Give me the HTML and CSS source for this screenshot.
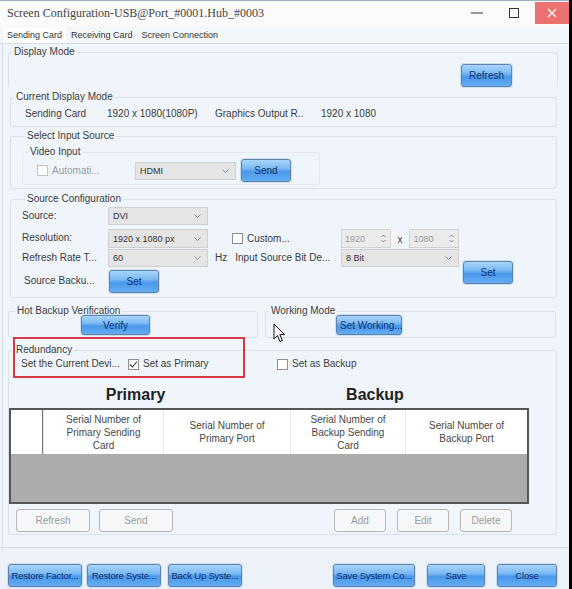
FILE: index.html
```html
<!DOCTYPE html>
<html lang="en">
<head>
    <meta charset="UTF-8">
    <meta name="viewport" content="width=device-width, initial-scale=1.0">
    <title>Screen Configuration</title>
    <link rel="stylesheet" href="styles.css">
</head>
<body>
    <div class="window">
        <!-- Title bar -->
        <div class="titlebar">
            <span class="title">Screen Configuration-USB@Port_#0001.Hub_#0003</span>
            <div class="win-controls">
                <span class="win-btn minimize">
                    <svg width="12" height="2" viewBox="0 0 12 2"><line x1="0" y1="1" x2="12" y2="1" stroke="#333" stroke-width="1"/></svg>
                </span>
                <span class="win-btn maximize">
                    <svg width="10" height="10" viewBox="0 0 10 10"><rect x="0.5" y="0.5" width="9" height="9" fill="none" stroke="#333" stroke-width="1"/></svg>
                </span>
                <span class="win-btn close">
                    <svg width="10" height="10" viewBox="0 0 10 10"><path d="M1 1 L9 9 M9 1 L1 9" stroke="#fff" stroke-width="1.2"/></svg>
                </span>
            </div>
        </div>

        <!-- Tabs -->
        <div class="tabs">
            <span class="tab active">Sending Card</span>
            <span class="tab">Receiving Card</span>
            <span class="tab">Screen Connection</span>
        </div>

        <!-- Sending Card page -->
        <div class="page">
            <fieldset class="group display-mode">
                <legend>Display Mode</legend>
                <div class="group-body">
                    <button class="btn-blue refresh">Refresh</button>
                </div>
            </fieldset>

            <fieldset class="group inner current-mode">
                <legend>Current Display Mode</legend>
                <div class="mode-row">
                    <span class="mode-card">Sending Card</span>
                    <span class="mode-res">1920 x 1080(1080P)</span>
                    <span class="mode-out">Graphics Output R..</span>
                    <span>1920 x 1080</span>
                </div>
            </fieldset>

            <fieldset class="group inner input-source">
                <legend>Select Input Source</legend>
                <fieldset class="group video-input">
                    <legend>Video Input</legend>
                    <div class="video-row">
                        <span class="check-label disabled"><span class="check"></span>Automati...</span>
                        <span class="select hdmi">HDMI<svg class="chev" width="7" height="4" viewBox="0 0 7 4"><polyline points="0.5,0.5 3.5,3.5 6.5,0.5" fill="none" stroke="#8a8a8a"/></svg></span>
                        <button class="btn-blue send">Send</button>
                    </div>
                </fieldset>
            </fieldset>

            <fieldset class="group inner source-config">
                <legend>Source Configuration</legend>
                <div class="config-grid">
                    <span class="field-label">Source:</span>
                    <span class="select">DVI<svg class="chev" width="7" height="4" viewBox="0 0 7 4"><polyline points="0.5,0.5 3.5,3.5 6.5,0.5" fill="none" stroke="#8a8a8a"/></svg></span>
                    <span></span><span></span><span></span><span></span><span></span>

                    <span class="field-label">Resolution:</span>
                    <span class="select tall">1920 x 1080 px<svg class="chev" width="7" height="4" viewBox="0 0 7 4"><polyline points="0.5,0.5 3.5,3.5 6.5,0.5" fill="none" stroke="#8a8a8a"/></svg></span>
                    <span></span>
                    <span class="check-label custom"><span class="check"></span>Custom...</span>
                    <span class="spin-pair">
                        <span class="spin">1920<svg width="5" height="9" viewBox="0 0 5 9"><polyline points="0.5,3 2.5,1 4.5,3" fill="none" stroke="#888"/><polyline points="0.5,6 2.5,8 4.5,6" fill="none" stroke="#888"/></svg></span>
                        <span class="times">x</span>
                        <span class="spin">1080<svg width="5" height="9" viewBox="0 0 5 9"><polyline points="0.5,3 2.5,1 4.5,3" fill="none" stroke="#888"/><polyline points="0.5,6 2.5,8 4.5,6" fill="none" stroke="#888"/></svg></span>
                    </span>
                    <span></span><span></span>

                    <span class="field-label">Refresh Rate T...</span>
                    <span class="select">60<svg class="chev" width="7" height="4" viewBox="0 0 7 4"><polyline points="0.5,0.5 3.5,3.5 6.5,0.5" fill="none" stroke="#8a8a8a"/></svg></span>
                    <span></span>
                    <span class="bit-label"><span>Hz</span><span>Input Source Bit De...</span></span>
                    <span class="select">8 Bit<svg class="chev" width="7" height="4" viewBox="0 0 7 4"><polyline points="0.5,0.5 3.5,3.5 6.5,0.5" fill="none" stroke="#8a8a8a"/></svg></span>
                    <span></span>
                    <button class="btn-blue set-right">Set</button>

                    <span class="field-label backup-label">Source Backu...</span>
                    <button class="btn-blue set-left">Set</button>
                </div>
            </fieldset>

            <div class="group-row">
                <fieldset class="group hot-backup">
                    <legend>Hot Backup Verification</legend>
                    <button class="btn-blue verify">Verify</button>
                </fieldset>
                <fieldset class="group working-mode">
                    <legend>Working Mode</legend>
                    <button class="btn-blue set-working">Set Working...</button>
                </fieldset>
            </div>

            <fieldset class="group redundancy">
                <legend>Redundancy</legend>
                <div class="role-row">
                    <span>Set the Current Devi...</span>
                    <span class="check-label"><span class="check checked"><svg width="9" height="9" viewBox="0 0 9 9"><polyline points="1,4.5 3.5,7 8,1.5" fill="none" stroke="#333" stroke-width="1.1"/></svg></span>Set as Primary</span>
                    <span class="check-label"><span class="check"></span>Set as Backup</span>
                </div>
                <div class="role-titles">
                    <span class="primary-title">Primary</span>
                    <span class="backup-title">Backup</span>
                </div>
                <div class="sn-table">
                    <div class="sn-head">
                        <span class="sn-cell first"></span>
                        <span class="sn-cell">Serial Number of<br>Primary Sending<br>Card</span>
                        <span class="sn-cell">Serial Number of<br>Primary Port</span>
                        <span class="sn-cell">Serial Number of<br>Backup Sending<br>Card</span>
                        <span class="sn-cell">Serial Number of<br>Backup Port</span>
                    </div>
                    <div class="sn-body"></div>
                </div>
                <div class="table-actions">
                    <button class="btn-off wide">Refresh</button>
                    <button class="btn-off wide">Send</button>
                    <button class="btn-off add">Add</button>
                    <button class="btn-off">Edit</button>
                    <button class="btn-off">Delete</button>
                </div>
            </fieldset>

            <!-- highlight drawn over the redundancy box -->
            <div class="highlight"></div>
            <svg class="cursor" width="13" height="20" viewBox="0 0 13 20">
                <path d="M1 1 L1 16 L4.5 12.5 L7 18.5 L9.3 17.5 L6.8 11.6 L11.5 11.6 Z" fill="#fff" stroke="#111" stroke-width="1" stroke-linejoin="round"/>
            </svg>
        </div>

        <!-- Bottom buttons -->
        <div class="footer">
            <button class="btn-blue foot">Restore Factor...</button>
            <button class="btn-blue foot">Restore Syste...</button>
            <button class="btn-blue foot back-up">Back Up Syste...</button>
            <button class="btn-blue foot save-sys">Save System Co...</button>
            <button class="btn-blue foot save">Save</button>
            <button class="btn-blue foot close-btn">Close</button>
        </div>
    </div>
</body>
</html>
```

FILE: styles.css
```css
/* General */
* {
    box-sizing: border-box;
}

body {
    margin: 0;
    background: #000;
    display: flex;
    font-family: 'Liberation Sans', Arial, sans-serif;
    font-size: 10px;
    color: #3c3c3c;
}

button {
    font-family: 'Liberation Sans', Arial, sans-serif;
    font-size: 10px;
    padding: 0;
    cursor: default;
}

.window {
    width: 569px;
    height: 589px;
    background: #eff5fb;
    display: flex;
    flex-direction: column;
}

/* Title bar */
.titlebar {
    height: 26px;
    flex-shrink: 0;
    background: #fbfbfb;
    border-top: 1px solid #9fb0c0;
    display: flex;
    align-items: flex-start;
    justify-content: space-between;
}

.title {
    font-family: 'Liberation Serif', 'Times New Roman', serif;
    font-size: 12px;
    color: #444;
    margin-left: 7px;
    line-height: 26px;
    margin-top: -1px;
}

.win-controls {
    display: flex;
    align-items: flex-start;
}

.win-btn {
    display: flex;
    align-items: center;
    justify-content: center;
    height: 22px;
    margin-top: 1px;
}

.minimize {
    width: 34px;
}

.maximize {
    width: 35px;
    margin-left: 2px;
    margin-right: 4px;
}

.close {
    width: 34px;
    background: #ec7272;
}

/* Tabs */
.tabs {
    height: 18px;
    flex-shrink: 0;
    display: flex;
    align-items: flex-end;
    padding-left: 3px;
    background: #f4f7fa;
    border-bottom: 1px solid #d3dce6;
}

.tab {
    font-size: 9px;
    line-height: 16px;
    padding: 0 4px 0 5px;
    color: #333;
}

.tab.active {
    background: #fff;
    padding: 0 4px;
    line-height: 16px;
}

/* Page */
.page {
    position: relative;
    flex: 1;
    margin-left: 2px;
    border-left: 1px solid #d3dde8;
    padding-left: 5px;
}

/* Group boxes */
.group {
    margin: 0;
    padding: 0;
    border: 1px solid #d9e1ea;
    border-radius: 3px;
    min-width: 0;
}

.group legend {
    padding: 0 2px;
    margin-left: 3px;
    line-height: 12px;
    font-size: 10px;
    color: #3c3c3c;
}

.group.inner {
    margin-left: 2px;
    width: 547px;
}

.display-mode {
    width: 550px;
    margin-top: 2px;
    border-bottom-color: transparent;
}

.display-mode .group-body {
    display: flex;
    justify-content: flex-end;
    padding: 6px 45px 0 0;
}

.current-mode {
    margin-top: 3px;
}

.mode-row {
    display: flex;
    line-height: 14px;
    padding: 4px 0 5px 14px;
}

.mode-card {
    width: 82px;
}

.mode-res {
    width: 108px;
}

.mode-out {
    width: 106px;
}

.input-source {
    margin-top: 3px;
    padding: 4px 0 3px 11px;
}

.video-input {
    width: 298px;
    border-color: #e3e9ef;
}

.video-input legend {
    margin-left: 5px;
}

.video-row {
    display: flex;
    align-items: center;
    padding: 1px 0 2px 14px;
}

.video-row .check-label {
    width: 98px;
}

.select.hdmi {
    width: 101px;
    margin-right: 5px;
}

/* Checkboxes */
.check-label {
    display: flex;
    align-items: center;
    gap: 4px;
}

.check-label.disabled {
    color: #9b9b9b;
}

.check {
    width: 11px;
    height: 11px;
    border: 1px solid #8f8f8f;
    background: #fff;
    display: flex;
    align-items: center;
    justify-content: center;
}

.check-label.disabled .check {
    border-color: #c4c4c4;
}

/* Selects and spin boxes */
.select {
    height: 18px;
    display: flex;
    align-items: center;
    justify-content: space-between;
    padding: 0 6px 0 4px;
    background: #e5e5e5;
    border: 1px solid #cfcfcf;
    font-size: 9px;
    color: #333;
}

.select.tall {
    height: 19px;
}

.spin-pair {
    display: flex;
    align-items: center;
}

.spin {
    width: 50px;
    height: 19px;
    display: flex;
    align-items: center;
    justify-content: space-between;
    padding: 0 4px 0 3px;
    background: #ebebeb;
    border: 1px solid #d2d2d2;
    font-size: 9px;
    color: #9a9a9a;
}

.times {
    width: 19px;
    text-align: center;
    padding-top: 2px;
}

/* Source configuration grid */
.source-config {
    margin-top: 4px;
    padding: 2px 0 4px 11px;
}

.config-grid {
    display: grid;
    grid-template-columns: 86px 100px 7px 126px 118px 4px 50px;
    grid-template-rows: 22px 20px 21px 23px;
    align-items: start;
}

.field-label {
    line-height: 18px;
}

.backup-label {
    padding-left: 2px;
    line-height: 21px;
}

.custom {
    padding-left: 17px;
    height: 19px;
}

.bit-label {
    display: flex;
    gap: 8px;
    line-height: 18px;
}

.set-right {
    grid-column: 7;
    grid-row: 3 / 5;
    margin-top: 12px;
    width: 50px;
}

.set-left {
    width: 50px;
    margin-left: 1px;
}

/* Hot backup / working mode row */
.group-row {
    display: flex;
    gap: 7px;
    margin-top: 7px;
}

.hot-backup {
    width: 250px;
    padding-bottom: 2px;
}

.hot-backup legend {
    margin-left: 6px;
}

.working-mode {
    width: 291px;
    padding-bottom: 2px;
}

.btn-blue.verify {
    height: 20px;
    width: 69px;
    margin: -2px 0 0 72px;
}

.btn-blue.set-working {
    height: 20px;
    width: 66px;
    margin: -2px 0 0 70px;
    text-align: left;
    padding-left: 3px;
}

/* Redundancy */
.redundancy {
    width: 549px;
    margin-top: 6px;
    padding-bottom: 2px;
}

.redundancy legend {
    margin-left: 5px;
}

.role-row {
    display: grid;
    grid-template-columns: 107px 149px auto;
    align-items: center;
    line-height: 14px;
    padding: 1px 0 0 12px;
}

.role-titles {
    display: flex;
    margin-top: 14px;
    font-size: 16px;
    font-weight: bold;
    line-height: 20px;
    color: #222;
}

.primary-title {
    width: 253px;
    text-align: center;
}

.backup-title {
    width: 226px;
    text-align: center;
}

.sn-table {
    width: 520px;
    margin-top: 3px;
    border: 2px solid #565656;
}

.sn-head {
    display: grid;
    grid-template-columns: 32px 120px 127px 115px 1fr;
    height: 44px;
    background: #fff;
}

.sn-cell {
    display: flex;
    align-items: center;
    justify-content: center;
    text-align: center;
    line-height: 13px;
    color: #484848;
    border-left: 1px solid #e6e6e6;
}

.sn-cell.first {
    border-left: none;
    border-right: 1px solid #7a7a7a;
}

.sn-body {
    height: 48px;
    background: #acacac;
}

.table-actions {
    display: flex;
    gap: 11px;
    margin-top: 5px;
    padding-left: 7px;
}

.btn-off {
    height: 23px;
    width: 52px;
    background: #f5f7f9;
    border: 1px solid #b6b6b6;
    border-radius: 3px;
    color: #9c9c9c;
}

.btn-off.wide {
    width: 74px;
    margin-right: -2px;
}

.btn-off.add {
    margin-left: 152px;
}

/* Blue buttons */
.btn-blue {
    height: 23px;
    border: 1px solid #5f83aa;
    border-radius: 3px;
    background: linear-gradient(#a9d5fb 0%, #7bbaf4 40%, #4b98ec 55%, #62acf2 100%);
    box-shadow: 0 0 0 1px #cfdeec;
    color: #10306c;
    white-space: nowrap;
}

.btn-blue.refresh {
    width: 51px;
}

.btn-blue.send {
    width: 50px;
}

/* Annotation overlay */
.highlight {
    position: absolute;
    left: 10px;
    top: 293px;
    width: 232px;
    height: 41px;
    border: 2px solid #d73a45;
}

.cursor {
    position: absolute;
    left: 270px;
    top: 279px;
}

/* Footer */
.footer {
    height: 42px;
    flex-shrink: 0;
    display: flex;
    align-items: flex-start;
    padding: 16px 12px 0 8px;
    background: #edf2f8;
    border-top: 1px solid #d4dce5;
}

.btn-blue.foot {
    width: 74px;
    margin-right: 5px;
    font-size: 9.5px;
    letter-spacing: -0.2px;
}

.btn-blue.back-up {
    margin-left: 2px;
}

.btn-blue.save-sys {
    width: 82px;
    margin-left: auto;
    margin-right: 12px;
}

.btn-blue.save {
    width: 58px;
    margin-right: 12px;
}

.btn-blue.close-btn {
    width: 60px;
    margin-right: 0;
}
```
